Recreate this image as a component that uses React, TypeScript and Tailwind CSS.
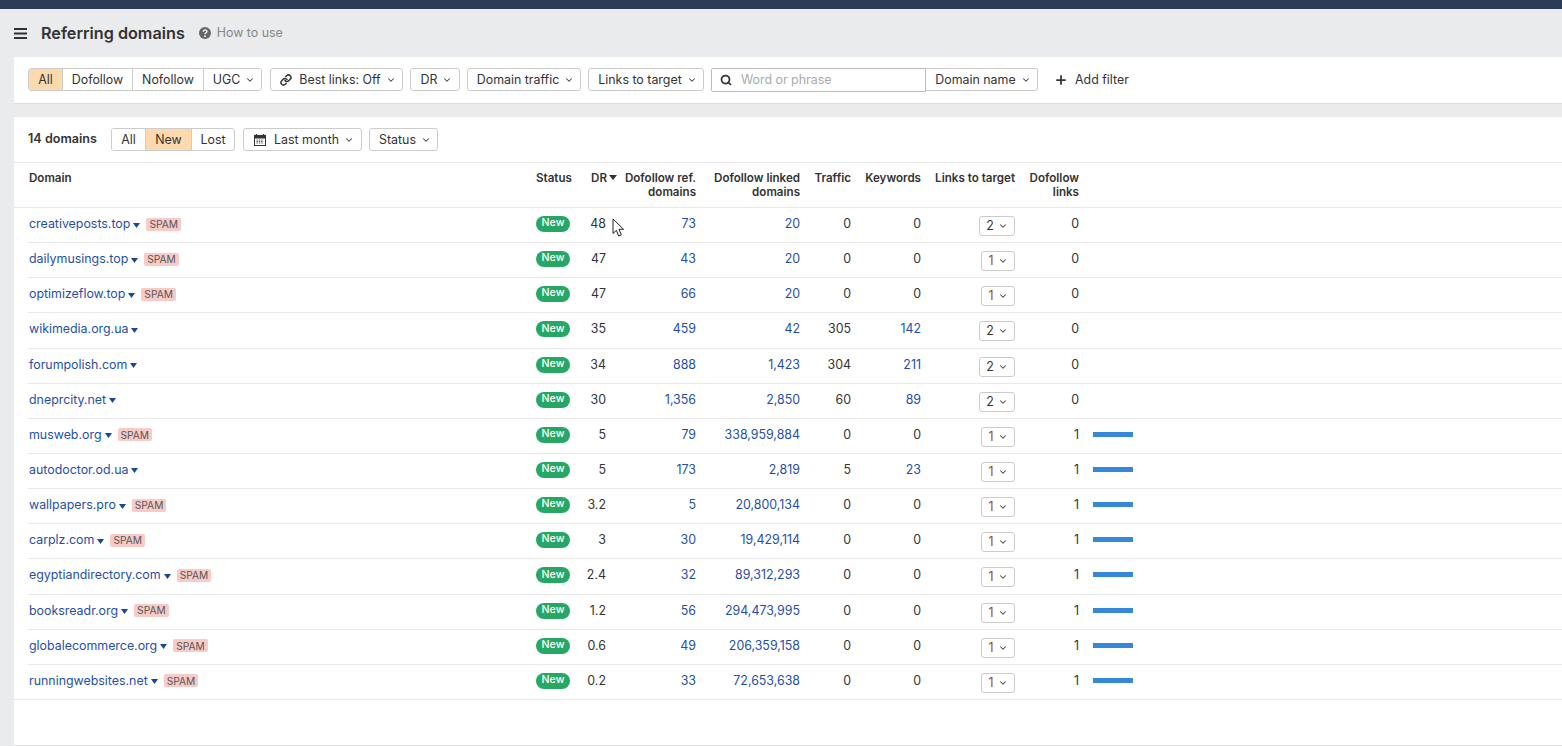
import React from 'react';
import { Link, ChevronDown, Search, Plus } from 'lucide-react';

type Row = {
  domain: string;
  spam: boolean;
  dr: string;
  ref: string;
  linked: string;
  traffic: string;
  keywords: string;
  links: string;
  dofollow: string;
};

const rows: Row[] = [
  { domain: 'creativeposts.top', spam: true, dr: '48', ref: '73', linked: '20', traffic: '0', keywords: '0', links: '2', dofollow: '0' },
  { domain: 'dailymusings.top', spam: true, dr: '47', ref: '43', linked: '20', traffic: '0', keywords: '0', links: '1', dofollow: '0' },
  { domain: 'optimizeflow.top', spam: true, dr: '47', ref: '66', linked: '20', traffic: '0', keywords: '0', links: '1', dofollow: '0' },
  { domain: 'wikimedia.org.ua', spam: false, dr: '35', ref: '459', linked: '42', traffic: '305', keywords: '142', links: '2', dofollow: '0' },
  { domain: 'forumpolish.com', spam: false, dr: '34', ref: '888', linked: '1,423', traffic: '304', keywords: '211', links: '2', dofollow: '0' },
  { domain: 'dneprcity.net', spam: false, dr: '30', ref: '1,356', linked: '2,850', traffic: '60', keywords: '89', links: '2', dofollow: '0' },
  { domain: 'musweb.org', spam: true, dr: '5', ref: '79', linked: '338,959,884', traffic: '0', keywords: '0', links: '1', dofollow: '1' },
  { domain: 'autodoctor.od.ua', spam: false, dr: '5', ref: '173', linked: '2,819', traffic: '5', keywords: '23', links: '1', dofollow: '1' },
  { domain: 'wallpapers.pro', spam: true, dr: '3.2', ref: '5', linked: '20,800,134', traffic: '0', keywords: '0', links: '1', dofollow: '1' },
  { domain: 'carplz.com', spam: true, dr: '3', ref: '30', linked: '19,429,114', traffic: '0', keywords: '0', links: '1', dofollow: '1' },
  { domain: 'egyptiandirectory.com', spam: true, dr: '2.4', ref: '32', linked: '89,312,293', traffic: '0', keywords: '0', links: '1', dofollow: '1' },
  { domain: 'booksreadr.org', spam: true, dr: '1.2', ref: '56', linked: '294,473,995', traffic: '0', keywords: '0', links: '1', dofollow: '1' },
  { domain: 'globalecommerce.org', spam: true, dr: '0.6', ref: '49', linked: '206,359,158', traffic: '0', keywords: '0', links: '1', dofollow: '1' },
  { domain: 'runningwebsites.net', spam: true, dr: '0.2', ref: '33', linked: '72,653,638', traffic: '0', keywords: '0', links: '1', dofollow: '1' },
];

const cols = 'grid grid-cols-[508px_37px_33px_90px_104px_51px_70px_94px_64px_1fr]';

const Caret = () => <ChevronDown className="w-[10px] h-[10px] ml-[5px] text-[#444]" strokeWidth={2.5} />;

const Btn = ({ w, children }: { w: string; children: React.ReactNode }) => (
  <div className={`${w} h-[23px] flex items-center justify-center pl-[3px] pt-[1px] bg-white border border-[#ccc] rounded-[3px] text-[#333] whitespace-nowrap`}>
    {children}
  </div>
);

const Seg = ({ w, active, last, children }: { w: string; active?: boolean; last?: boolean; children: React.ReactNode }) => (
  <div className={`${w} h-full flex items-center justify-center pt-[1px] ${active ? 'bg-[#fdd9ae]' : 'bg-white'} ${last ? '' : 'border-r border-[#ccc]'}`}>
    {children}
  </div>
);

const App: React.FC = () => {
  return (
    <div className="h-[746px] overflow-hidden bg-[#e9ebed] text-[12.4px] text-[#333] relative" style={{ fontFamily: 'Inter, sans-serif' }}>
      <div className="h-[9px] bg-[#2d3b58]" />

      <div className="h-[48px] flex items-center pl-[14px]">
        <svg viewBox="0 0 13 11" className="w-[13px] h-[11px]">
          <path d="M0 1h13M0 5.5h13M0 10h13" stroke="#333" strokeWidth="2" />
        </svg>
        <h1 className="ml-[14px] text-[16.2px] font-semibold text-[#333]">Referring domains</h1>
        <svg viewBox="0 0 12 12" className="ml-[14px] w-[12px] h-[12px]">
          <circle cx="6" cy="6" r="6" fill="#666" />
          <path d="M4.2 4.7c0-2.3 3.7-2.3 3.7-.2 0 1.3-1.9 1.3-1.9 2.8" fill="none" stroke="#fff" strokeWidth="1.3" />
          <circle cx="6" cy="9.2" r=".85" fill="#fff" />
        </svg>
        <span className="ml-[6px] text-[#888]">How to use</span>
      </div>

      <div className="ml-[14px] h-[47px] bg-white border-b border-[#ddd] flex items-center pl-[14px] pb-[1px]">
        <div className="flex h-[23px] border border-[#ccc] rounded-[3px] overflow-hidden">
          <Seg w="w-[34px]" active>All</Seg>
          <Seg w="w-[70px]">Dofollow</Seg>
          <Seg w="w-[71px]">Nofollow</Seg>
          <Seg w="w-[57px] pl-[3px]" last>UGC<Caret /></Seg>
        </div>
        <div className="ml-[8px]">
          <Btn w="w-[133px]"><Link className="w-[12px] h-[12px] mr-[7px]" strokeWidth={3} />Best links: Off<Caret /></Btn>
        </div>
        <div className="ml-[7px]"><Btn w="w-[50px]">DR<Caret /></Btn></div>
        <div className="ml-[7px]"><Btn w="w-[114px]">Domain traffic<Caret /></Btn></div>
        <div className="ml-[7px]"><Btn w="w-[116px]">Links to target<Caret /></Btn></div>
        <div className="ml-[7px] w-[215px] h-[24px] border border-[#bbb] rounded-l-[2px] flex items-center pl-[8px] pt-[1px] text-[#aaa]">
          <Search className="w-[12px] h-[12px] text-[#333] mr-[9px]" strokeWidth={3.5} />
          Word or phrase
        </div>
        <div className="w-[112px] h-[23px] flex items-center justify-center pl-[3px] pt-[1px] border border-l-0 border-[#ccc] rounded-r-[3px] whitespace-nowrap">
          Domain name<Caret />
        </div>
        <Plus className="ml-[16px] w-[14px] h-[14px] text-[#333]" strokeWidth={3} />
        <span className="ml-[7px] pt-[1px]">Add filter</span>
      </div>

      <div className="ml-[14px] mt-[13px] h-[629px] bg-white border-b border-[#ddd]">
        <div className="h-[46px] flex items-center pl-[14px] border-b border-[#e8e8e8]">
          <span className="font-semibold text-[12.6px] w-[83px] whitespace-nowrap -mt-[1px]">14 domains</span>
          <div className="flex h-[23px] w-[124px] border border-[#ccc] rounded-[3px] overflow-hidden">
            <Seg w="w-[34px]">All</Seg>
            <Seg w="w-[45px]" active last>New</Seg>
            <div className="flex-1 flex items-center justify-center pt-[1px] border-l border-[#ccc]">Lost</div>
          </div>
          <div className="ml-[8px]">
            <Btn w="w-[119px]">
              <svg viewBox="0 0 12 12" className="w-[12px] h-[12px] mr-[8px] -mt-[1px]">
                <path d="M2.5 0v2M9.5 0v2" stroke="#333" strokeWidth="1.4" />
                <rect x=".5" y="1.5" width="11" height="10" fill="#fff" stroke="#333" />
                <rect x="1" y="2" width="10" height="2.5" fill="#333" />
                <path d="M2.5 6h7M2.5 7.5h7M2.5 9h7" stroke="#555" strokeWidth="1" strokeDasharray="1.4 .9" />
              </svg>
              Last month<Caret />
            </Btn>
          </div>
          <div className="ml-[7px]"><Btn w="w-[69px]">Status<Caret /></Btn></div>
        </div>

        <div className={`${cols} h-[45px] pl-[14px] pt-[8px] border-b border-[#e8e8e8] text-[11.6px] leading-[14px] font-semibold text-[#333]`}>
          <div className="pl-[1px]">Domain</div>
          <div>Status</div>
          <div className="flex justify-end whitespace-nowrap">
            <span className="flex items-start -mr-[11px]">
              DR
              <svg viewBox="0 0 8 5" className="w-[8px] h-[5px] ml-[2px] mt-[4px]"><path d="M0 0h8L4 5z" fill="#333" /></svg>
            </span>
          </div>
          <div className="text-right whitespace-nowrap">Dofollow ref.<br />domains</div>
          <div className="text-right whitespace-nowrap">Dofollow linked<br />domains</div>
          <div className="text-right">Traffic</div>
          <div className="text-right">Keywords</div>
          <div className="text-right whitespace-nowrap">Links to target</div>
          <div className="text-right">Dofollow<br />links</div>
          <div />
        </div>

        {rows.map((row, idx) => (
          <div key={row.domain} className={`h-[35.15px] border-b border-[#e8e8e8] ${idx === rows.length - 1 ? 'pl-[14px]' : 'ml-[14px]'}`}>
            <div className={`${cols} h-full items-start pt-[7px] leading-[16px]`}>
              <div className="flex items-center pl-[1px] pt-[1px]">
                <a className="text-[#1f4fa8] whitespace-nowrap">{row.domain}</a>
                <svg viewBox="0 0 7 5" className="w-[7px] h-[5px] ml-[3px] mt-[2px]"><path d="M0 0h7L3.5 5z" fill="#1a469b" /></svg>
                {row.spam && (
                  <span className="ml-[6px] h-[13px] px-[3px] flex items-center rounded-[2px] bg-[#f9cbc7] text-[#555] text-[10.2px] leading-none">SPAM</span>
                )}
              </div>
              <div className="pt-[1px]">
                <span className="flex w-[34px] h-[16px] items-center justify-center rounded-full bg-[#27a765] text-white text-[10.6px] font-medium leading-none pb-[1px]">New</span>
              </div>
              <div className="text-right pt-[1px]">{row.dr}</div>
              <div className="text-right text-[#1f4fa8] pt-[1px]">{row.ref}</div>
              <div className="text-right text-[#1f4fa8] pt-[1px]">{row.linked}</div>
              <div className="text-right pt-[1px]">{row.traffic}</div>
              <div className={`text-right pt-[1px] ${row.keywords === '0' ? '' : 'text-[#1f4fa8]'}`}>{row.keywords}</div>
              <div className="flex justify-end">
                <div className={`${row.links === '2' ? 'w-[36px]' : 'w-[34px]'} h-[20px] mt-[1px] flex items-center justify-center border border-[#ccc] rounded-[3px] ${row.links === '2' ? 'text-[#333]' : 'text-[#a0451a]'}`}>
                  {row.links}
                  <ChevronDown className="w-[10px] h-[10px] ml-[4px] text-[#444]" strokeWidth={2.5} />
                </div>
              </div>
              <div className="text-right pt-[1px]">{row.dofollow}</div>
              <div className="pl-[14px] pt-[6px]">
                {row.dofollow === '1' && <div className="w-[40px] h-[5px] bg-[#3588d8]" />}
              </div>
            </div>
          </div>
        ))}
      </div>

      <svg viewBox="0 0 13 20" className="absolute left-[612px] top-[218px] w-[13px] h-[20px]">
        <path d="M1 1v14.5l3.4-3.2 2.3 5.7 2.7-1.1-2.4-5.6h4.6z" fill="#fff" stroke="#222" strokeWidth="1" strokeLinejoin="round" />
      </svg>
    </div>
  );
};

export default App;
